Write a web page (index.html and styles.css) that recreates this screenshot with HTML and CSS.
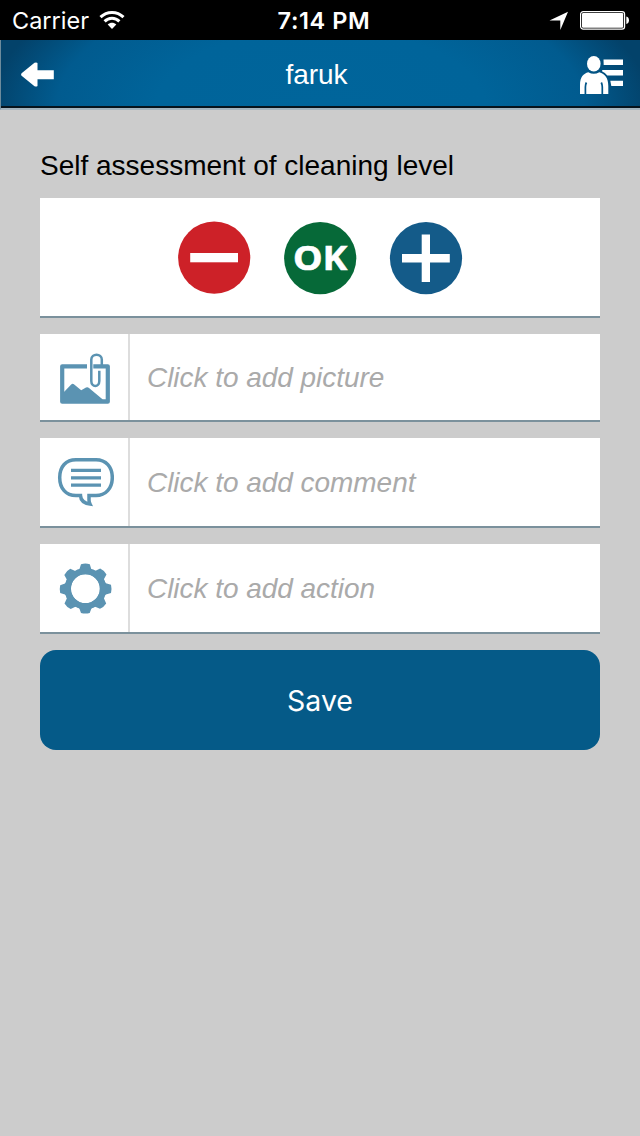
FILE: index.html
```html
<!DOCTYPE html>
<html lang="en">

<head>
  <meta charset="utf-8" />
  <meta name="viewport" content="width=device-width">
  <title>faruk</title>
  <link rel="stylesheet" href="styles.css">
</head>

<body>
  <div class="statusbar">
    <div class="carrier">
      <span>Carrier</span>
      <svg width="26" height="20" viewBox="0 0 26 20">
        <g fill="none" stroke="#fff" stroke-width="3">
          <path d="M1.5 7.2C8 .9 18 .9 24.5 7.2" />
          <path d="M5.6 11.4C9.8 7.3 16.2 7.3 20.4 11.4" />
        </g>
        <path d="M8.7 14.5C11.2 12.1 14.8 12.1 17.3 14.5L13 19Z" fill="#fff" />
      </svg>
    </div>
    <div class="time">7:14 PM</div>
    <div class="indicators">
      <svg width="20" height="20" viewBox="0 0 20 20">
        <path d="M19 1.7L11.3 20V10.5H.5Z" fill="#fff" />
      </svg>
      <svg width="50" height="20" viewBox="0 0 50 20">
        <rect x=".6" y="1.6" width="44" height="17.5" rx="2.6" fill="none" stroke="#fff" stroke-width="1.2" />
        <rect x="2" y="3" width="41.2" height="14.7" rx="1.2" fill="#fff" />
        <path d="M46.3 6.5Q49 7.3 49 10.3T46.3 14Z" fill="#fff" />
      </svg>
    </div>
  </div>

  <div class="header">
    <svg class="back" width="34" height="26" viewBox="0 0 34 26">
      <path d="M.6 11.2L13.5 .8Q15.5 0 16.5 1V8.2H32.8V17.2H16.5V24Q15.5 25 13.5 24.3L.6 13.8Q-.4 12.5 .6 11.2Z" fill="#fff" />
    </svg>
    <h1>faruk</h1>
    <svg class="profile" width="43" height="40" viewBox="0 0 43 40">
      <g fill="#fff">
        <ellipse cx="13.8" cy="8.8" rx="6.8" ry="7.8" />
        <path d="M0 39V30C0 22 3.5 18.4 8.3 17.2Q13.8 20.5 19.3 17.2C25 18.8 28.3 23 28.3 31V39Z" />
        <path d="M23.5 4.5H43V10H23.7ZM22.2 15H43V20.6H27.3Q25 17.5 22.2 16.4ZM30.3 25.7H43V31H31.3Z" />
      </g>
      <path d="M5.4 39V32Q5.4 29.5 6.4 27.5M22.3 39V32Q22.3 29.5 21.3 27.5" fill="none" stroke="#015487" stroke-width="1.7" />
    </svg>
  </div>

  <div class="content">
    <label>Self assessment of cleaning level</label>
    <div class="card rating">
      <svg width="74" height="74" viewBox="0 0 74 74">
        <circle cx="37.2" cy="36.7" r="36.1" fill="#cd2128" />
        <rect x="13.2" y="32" width="47.8" height="9.3" fill="#fff" />
      </svg>
      <svg width="74" height="74" viewBox="0 0 74 74">
        <circle cx="37.2" cy="37.2" r="36.1" fill="#066938" />
        <text class="ok" x="37.2" y="49.4" text-anchor="middle" textLength="54.5" lengthAdjust="spacingAndGlyphs">OK</text>
      </svg>
      <svg width="74" height="74" viewBox="0 0 74 74">
        <circle cx="37" cy="37.2" r="36.1" fill="#145b89" />
        <path d="M13 33H32.7V13.5H41V33H60.8V41.5H41V61H32.7V41.5H13Z" fill="#fff" />
      </svg>
    </div>

    <div class="card row picture">
      <div class="icon">
        <svg width="60" height="60" viewBox="0 0 60 60">
          <path d="M33 19.3H8.2V54.7H53.8V19.3H39.3" fill="none" stroke="#5b93b2" stroke-width="4.2" stroke-linejoin="round" />
          <path d="M9 46L17.2 37.5Q18.7 36 20.2 37.5L27.2 43.3L32 40.6Q33.6 39.7 35 41L48.8 52.5H53V55H9Z" fill="#5b93b2" />
          <path d="M47.8 18V12.5C47.8 6 37.3 6 37.3 12.5V34C37.3 40.5 45.3 40.5 45.3 34V23.7" fill="none" stroke="#5b93b2" stroke-width="2.5" />
        </svg>
      </div>
      <div class="hint">Click to add picture</div>
    </div>

    <div class="card row">
      <div class="icon">
        <svg width="60" height="60" viewBox="0 0 60 60">
          <g fill="none" stroke="#5b93b2">
            <path d="M22 7.7H42C52 7.7 58.3 15 58.3 25.5C58.3 36.5 51.5 43.6 42 43.6H35V48Q35 50 36 52C30.5 51.3 26.8 48.5 26.5 43.6H22C12 43.6 5.7 36.5 5.7 25.5S12 7.7 22 7.7Z" stroke-width="3.5" />
            <path d="M17 18.4H47M17 25.8H47M17 33.2H47" stroke-width="3.2" />
          </g>
        </svg>
      </div>
      <div class="hint">Click to add comment</div>
    </div>

    <div class="card row">
      <div class="icon">
        <svg width="60" height="60" viewBox="-1 0 60 60">
          <path fill="#5b93b2" fill-rule="evenodd" d="M26 6.2Q30.4 5 34.8 6.2L36.4 11.4Q38.3 13 40.5 12.7L45.2 10.5Q49.5 12.5 51.5 16.5L49 21Q49 23.5 50.9 25.2L56 26.8Q57 31 56 34.9L50.9 36.4Q49 38 49 40.6L51.2 45.5Q49 49 45 50.8L40.2 48.7Q38 48.7 36.4 50.4L34.7 55Q30.4 56 26 55L24.4 50.4Q22.5 48.7 20.4 48.7L15.7 51Q11.5 49 9.5 45.5L11.8 40.6Q11.7 38 10 36.4L5.2 34.9Q4.3 31 5.2 27.2L10 25.6Q11.8 24 11.8 21.4L9.3 17Q11.5 12.7 15.3 10.8L20.2 13Q22.5 13.2 24.3 11.4ZM30.4 16.3A14.4 14.4 0 1 0 30.4 45.1A14.4 14.4 0 1 0 30.4 16.3Z" />
          <circle cx="30.4" cy="30.7" r="17.6" fill="none" stroke="#5b93b2" stroke-width="6.2" />
        </svg>
      </div>
      <div class="hint">Click to add action</div>
    </div>

    <button class="save">Save</button>
  </div>
</body>

</html>
```

FILE: styles.css
```css
body {
  font-family: "Liberation Sans", Arial, Helvetica, sans-serif;
  font-size: 28px;
  color: #000;
  background-color: #cccccc;
  padding: 0;
  margin: 0;
}

svg {
  display: block;
}

.statusbar {
  display: grid;
  grid-template-columns: 1fr auto 1fr;
  align-items: center;
  height: 40px;
  padding: 0 10px 0 12px;
  font-family: Inter, sans-serif;
  font-size: 23.5px;
  color: #fff;
  background: #000;
}

.carrier {
  display: flex;
  align-items: center;
  gap: 10px;
  padding-top: 1px;
}

.carrier svg {
  margin-top: -2px;
}

.time {
  padding: 1px 0 0 6px;
  font-weight: 600;
  font-size: 23.5px;
  letter-spacing: 0.6px;
}

.indicators {
  display: flex;
  justify-content: flex-end;
  gap: 11px;
}

.header {
  display: flex;
  align-items: center;
  justify-content: space-between;
  box-sizing: border-box;
  height: 70px;
  padding: 2px 17px 0 20px;
  color: #fff;
  background: radial-gradient(ellipse 330px 158px at 50% 100%, #00659b 0%, #00649a 50%, #015b8f 80%, #03426a 100%);
  border-left: 1px solid #6d8b9c;
  border-bottom: 2px solid #a5b5bf;
  box-shadow: inset 0 -2px #06131c;
}

.header h1 {
  margin: 0 2px 0 0;
  font-family: "Liberation Sans", Arial, sans-serif;
  font-size: 28px;
  font-weight: normal;
}

.content {
  padding: 40px;
}

label {
  display: block;
  height: 48px;
  line-height: 32px;
}

.card {
  display: flex;
  box-sizing: border-box;
  margin-bottom: 16px;
  background: #fff;
  border-bottom: 2px solid #7b919c;
}

.rating {
  justify-content: center;
  align-items: center;
  gap: 32px;
  height: 120px;
  padding-top: 2px;
}

.ok {
  font-family: "Noto Sans", "Open Sans", sans-serif;
  font-size: 34.5px;
  font-weight: 700;
  fill: #fff;
  stroke: #fff;
  stroke-width: 0.5px;
}

.row {
  height: 90px;
}

.row.picture {
  height: 88px;
}

.icon {
  display: flex;
  align-items: center;
  justify-content: center;
  width: 88px;
  border-right: 2px solid #dddddd;
}

.hint {
  display: flex;
  align-items: center;
  padding: 2px 0 0 17px;
  font-style: italic;
  letter-spacing: -0.04px;
  color: #aaaaaa;
}

.save {
  display: block;
  width: 100%;
  height: 100px;
  border: 0;
  border-radius: 16px;
  font-family: Inter, sans-serif;
  font-size: 28.5px;
  color: #fff;
  background: #055a88;
}
```
